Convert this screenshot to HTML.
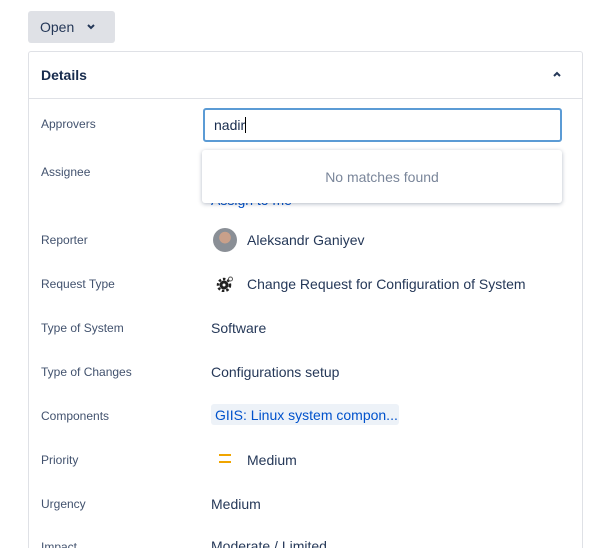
<!DOCTYPE html>
<html style="width:604px;height:548px;overflow:hidden"><head><style>
*{box-sizing:border-box;margin:0;padding:0}
body{width:604px;height:548px;overflow:hidden;background:#fff;font-family:"Liberation Sans",sans-serif;color:#172b4d;position:relative}
.a{position:absolute;white-space:nowrap}
.lbl{font-size:12px;left:41px;color:#42526e}
.val{font-size:14px;color:#253858}
</style></head><body>
<div class="a" style="left:28px;top:11px;width:87px;height:32px;background:#dfe1e6;border-radius:3px;font-size:14px;line-height:32px;padding-left:12px;color:#253858">Open
<svg style="position:absolute;left:58px;top:12px" width="10" height="8" viewBox="0 0 10 8"><path d="M2 2l3 3 3-3" stroke="#253858" stroke-width="2" fill="none"/></svg></div>
<div class="a" style="left:28px;top:51px;width:555px;height:520px;border:1px solid #dfe1e6;border-radius:3px"></div>
<div class="a" style="left:29px;top:98px;width:553px;height:1px;background:#dfe1e6"></div>
<div class="a" style="left:41px;top:67px;font-size:14px;font-weight:bold;color:#172b4d">Details</div>
<svg class="a" style="left:552px;top:70px" width="10" height="8" viewBox="0 0 10 8"><path d="M2 6l3-3 3 3" stroke="#253858" stroke-width="2" fill="none"/></svg>

<div class="a lbl" style="top:117px">Approvers</div>
<div class="a lbl" style="top:165px">Assignee</div>
<div class="a lbl" style="top:233px">Reporter</div>
<div class="a lbl" style="top:277px">Request Type</div>
<div class="a lbl" style="top:321px">Type of System</div>
<div class="a lbl" style="top:365px">Type of Changes</div>
<div class="a lbl" style="top:409px">Components</div>
<div class="a lbl" style="top:453px">Priority</div>
<div class="a lbl" style="top:497px">Urgency</div>
<div class="a lbl" style="top:540px">Impact</div>

<div class="a val" style="left:211px;top:192px;color:#0052cc">Assign to me</div>
<div class="a" style="left:213px;top:228px;width:24px;height:24px;border-radius:50%;background:radial-gradient(circle at 50% 40%,#c9a08a 0 30%,#8a8f96 32%)"></div>
<div class="a val" style="left:247px;top:232px">Aleksandr Ganiyev</div>
<svg class="a" style="left:216px;top:276px" width="18" height="16" viewBox="0 0 18 16"><circle cx="8" cy="9" r="4.5" fill="#222"/><circle cx="8" cy="9" r="6" fill="none" stroke="#222" stroke-width="2.5" stroke-dasharray="2.5 2"/><circle cx="8" cy="9" r="1.5" fill="#fff"/><circle cx="14.5" cy="3" r="2" fill="none" stroke="#555" stroke-width="1"/></svg>
<div class="a val" style="left:247px;top:276px">Change Request for Configuration of System</div>
<div class="a val" style="left:211px;top:320px">Software</div>
<div class="a val" style="left:211px;top:364px">Configurations setup</div>
<div class="a" style="left:211px;top:404px;width:188px;height:21px;background:#edf2f8;border-radius:3px"></div>
<div class="a val" style="left:215px;top:407px;color:#0052cc">GIIS: Linux system compon...</div>
<div class="a" style="left:219px;top:454px;width:12px;height:2px;background:#f0a500"></div>
<div class="a" style="left:219px;top:461px;width:12px;height:2px;background:#f0a500"></div>
<div class="a val" style="left:247px;top:452px">Medium</div>
<div class="a val" style="left:211px;top:496px">Medium</div>
<div class="a val" style="left:211px;top:538px">Moderate / Limited</div>

<div class="a" style="left:203px;top:108px;width:359px;height:34px;border:2px solid #5b9bd5;border-radius:3px;background:#fff;font-size:14px;line-height:30px;padding-left:9px">nadir<span style="display:inline-block;width:1px;height:16px;background:#000;vertical-align:-3px"></span></div>
<div class="a" style="left:202px;top:150px;width:360px;height:53px;background:#fff;border-radius:3px;box-shadow:0 1px 4px rgba(9,30,66,.3);font-size:14px;color:#7a869a;text-align:center;line-height:54px">No matches found</div>
</body></html>
